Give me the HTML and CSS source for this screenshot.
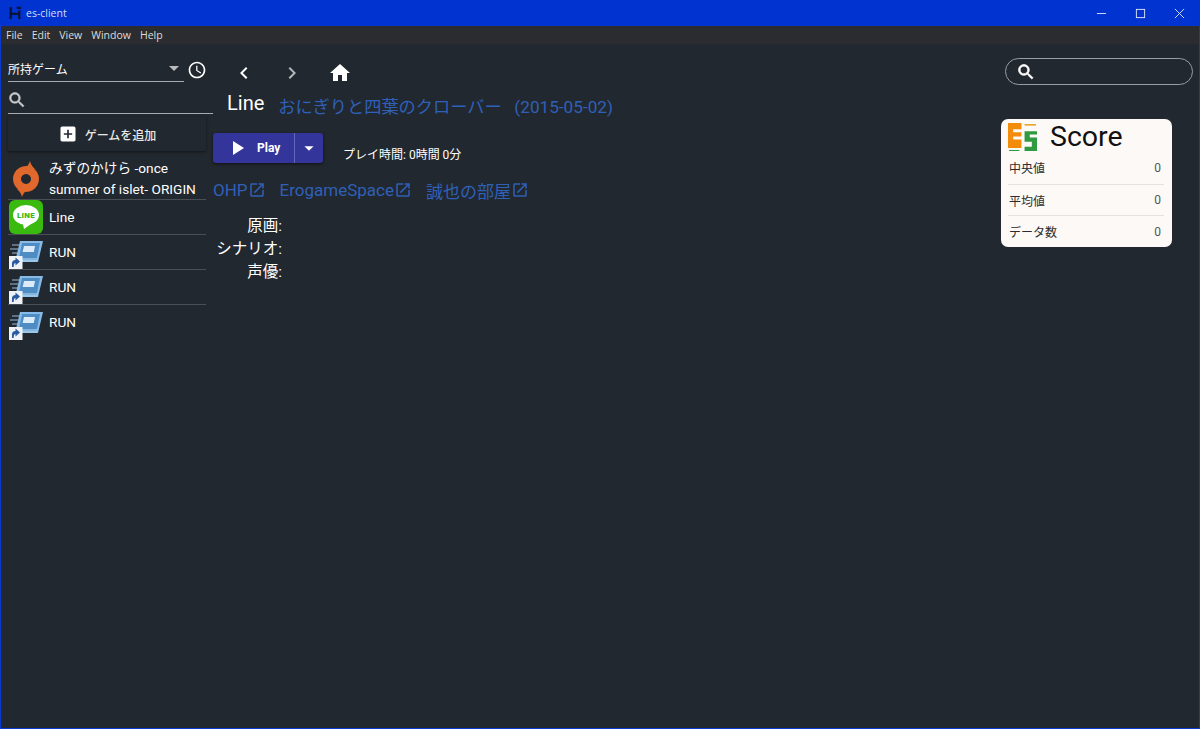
FILE: index.html
```html
<!DOCTYPE html>
<html lang="ja">
<head>
    <meta charset="UTF-8">
    <title>es-client</title>
    <link rel="stylesheet" href="styles.css">
</head>
<body>
    <svg class="defs" width="0" height="0">
        <symbol id="run-icon" viewBox="0 0 34 34">
            <path d="M3 10h8M1 14h8M3 18h6M2 22h5" stroke="#8fa9c6" stroke-width="1.300" opacity=".75"/>
            <path d="M11 6h23l-5 21H6z" fill="#86bbe8"/>
            <path d="M13 8h18l-3.500 17H9.500z" fill="#4f8cc4"/>
            <path d="M15 11h11l-1.200 6H13.600z" fill="#dcebf8"/>
            <path d="M11 23h18l-1.500 4H6z" fill="#a9d0ee" opacity=".6"/>
            <rect x="0" y="21" width="13.500" height="13" fill="#eef2f6"/>
            <path d="M3 32v-3.500c0-2.200 1.200-3.500 3.500-3.500v-2.500l4.500 4-4.500 4V28c-1.200 0-1.800 1.200-1.800 4z" fill="#2a5aa0"/>
        </symbol>
    </svg>

    <div class="window">
        <div class="titlebar">
            <svg class="app-logo" viewBox="0 0 14 16"><path d="M2 1v14M12 5v10M2 9h10M9 2h5" stroke="#071338" stroke-width="2.600" fill="none"/></svg>
            <span class="app-name">es-client</span>
            <div class="win-buttons">
                <svg viewBox="0 0 12 12"><path d="M1 6h10" stroke="#dfe6ff" stroke-width="1"/></svg>
                <svg viewBox="0 0 12 12"><rect x="1.500" y="1.500" width="9" height="9" fill="none" stroke="#dfe6ff" stroke-width="1"/></svg>
                <svg viewBox="0 0 12 12"><path d="M1 1l10 10M11 1L1 11" stroke="#dfe6ff" stroke-width="1"/></svg>
            </div>
        </div>
        <div class="menubar">
            <span>File</span><span>Edit</span><span>View</span><span>Window</span><span>Help</span>
        </div>

        <div class="layout">
            <div class="sidebar">
                <div class="filter-row">
                    <div class="select">
                        <span>所持ゲーム</span>
                        <svg class="caret" viewBox="0 0 10 5"><path d="M0 0l5 5 5-5z"/></svg>
                    </div>
                    <svg class="clock" viewBox="0 0 24 24"><path d="M11.990 2C6.470 2 2 6.480 2 12s4.470 10 9.990 10C17.520 22 22 17.520 22 12S17.520 2 11.990 2zM12 20c-4.420 0-8-3.580-8-8s3.580-8 8-8 8 3.580 8 8-3.580 8-8 8zm.5-13H11v6l5.250 3.150.75-1.230-4.500-2.670z"/></svg>
                </div>
                <div class="side-search">
                    <svg viewBox="0 0 24 24"><path d="M15.500 14h-.79l-.28-.27C15.410 12.590 16 11.110 16 9.500 16 5.910 13.090 3 9.500 3S3 5.910 3 9.500 5.910 16 9.500 16c1.610 0 3.090-.59 4.230-1.570l.27.28v.79l5 4.990L20.490 19l-4.990-5zm-6 0C7.010 14 5 11.990 5 9.500S7.010 5 9.500 5 14 7.010 14 9.500 11.990 14 9.500 14z"/></svg>
                </div>
                <div class="add-btn">
                    <svg viewBox="0 0 24 24"><path d="M19 3H5c-1.110 0-2 .9-2 2v14c0 1.100.89 2 2 2h14c1.100 0 2-.9 2-2V5c0-1.100-.9-2-2-2zm-2 10h-4v4h-2v-4H7v-2h4V7h2v4h4v2z"/></svg>
                    <span>ゲームを追加</span>
                </div>
                <ul class="game-list">
                    <li class="game tall">
                        <svg class="game-icon" viewBox="0 0 34 40">
                            <path d="M21 4c.5 3 2 5 5 8H15c3-2 5-5 6-8z" fill="#e0682c"/>
                            <path d="M13 40c-.5-3-2-5-5-8h11c-3 2-5 5-6 8z" fill="#e0682c"/>
                            <path fill="#e0682c" fill-rule="evenodd" d="M17 9a13 13 0 1 0 .01 0zM17 17a5 5 0 1 1-.01 0z"/>
                        </svg>
                        <span>みずのかけら -once summer of islet- ORIGIN</span>
                    </li>
                    <li class="game">
                        <svg class="game-icon" viewBox="0 0 34 34">
                            <rect width="34" height="34" rx="6" fill="#3ab90f"/>
                            <ellipse cx="17" cy="15" rx="13" ry="10" fill="#fff"/>
                            <path d="M14 24l1 5 7-5z" fill="#fff"/>
                            <text x="17" y="18" class="line-text">LINE</text>
                        </svg>
                        <span>Line</span>
                    </li>
                    <li class="game"><svg class="game-icon"><use href="#run-icon"/></svg><span>RUN</span></li>
                    <li class="game"><svg class="game-icon"><use href="#run-icon"/></svg><span>RUN</span></li>
                    <li class="game"><svg class="game-icon"><use href="#run-icon"/></svg><span>RUN</span></li>
                </ul>
            </div>

            <div class="content">
                <div class="nav">
                    <svg viewBox="0 0 24 24"><path d="M15.410 7.410L14 6l-6 6 6 6 1.410-1.410L10.830 12z"/></svg>
                    <svg class="dim" viewBox="0 0 24 24"><path d="M10 6L8.590 7.410 13.170 12l-4.580 4.590L10 18l6-6z"/></svg>
                    <svg viewBox="0 0 24 24"><path d="M10 20v-6h4v6h5v-8h3L12 3 2 12h3v8z"/></svg>
                </div>
                <div class="title-row">
                    <h1>Line</h1>
                    <a class="brand">おにぎりと四葉のクローバー&nbsp;&nbsp; (2015-05-02)</a>
                </div>
                <div class="play-row">
                    <div class="play-group">
                        <div class="play-btn">
                            <svg viewBox="0 0 24 24"><path d="M8 5v14l11-7z"/></svg>
                            <span>Play</span>
                        </div>
                        <div class="play-more">
                            <svg viewBox="0 0 24 24"><path d="M7 10l5 5 5-5z"/></svg>
                        </div>
                    </div>
                    <span class="playtime">プレイ時間: 0時間 0分</span>
                </div>
                <div class="links">
                    <a>OHP<svg viewBox="0 0 24 24"><path d="M19 19H5V5h7V3H5c-1.110 0-2 .9-2 2v14c0 1.100.89 2 2 2h14c1.100 0 2-.9 2-2v-7h-2v7zM14 3v2h3.590l-9.830 9.830 1.410 1.410L19 6.410V10h2V3h-7z"/></svg></a>
                    <a>ErogameSpace<svg viewBox="0 0 24 24"><path d="M19 19H5V5h7V3H5c-1.110 0-2 .9-2 2v14c0 1.100.89 2 2 2h14c1.100 0 2-.9 2-2v-7h-2v7zM14 3v2h3.590l-9.830 9.830 1.410 1.410L19 6.410V10h2V3h-7z"/></svg></a>
                    <a>誠也の部屋<svg viewBox="0 0 24 24"><path d="M19 19H5V5h7V3H5c-1.110 0-2 .9-2 2v14c0 1.100.89 2 2 2h14c1.100 0 2-.9 2-2v-7h-2v7zM14 3v2h3.590l-9.830 9.830 1.410 1.410L19 6.410V10h2V3h-7z"/></svg></a>
                </div>
                <div class="staff">
                    <div>原画:</div>
                    <div>シナリオ:</div>
                    <div>声優:</div>
                </div>
            </div>

            <div class="aside">
                <div class="top-search">
                    <svg viewBox="0 0 24 24"><path d="M15.500 14h-.79l-.28-.27C15.410 12.590 16 11.110 16 9.500 16 5.910 13.090 3 9.500 3S3 5.910 3 9.500 5.910 16 9.500 16c1.610 0 3.090-.59 4.230-1.570l.27.28v.79l5 4.990L20.490 19l-4.990-5zm-6 0C7.010 14 5 11.990 5 9.500S7.010 5 9.500 5 14 7.010 14 9.500 11.990 14 9.500 14z"/></svg>
                </div>
                <div class="score-card">
                    <div class="score-head">
                        <svg viewBox="0 0 28 28">
                            <path d="M0 1h13v6H5v3h8v4H5v3h8v8H0z" fill="#f28c0a"/>
                            <path d="M16 2h11v1.500H16z" fill="#e8a020"/>
                            <path d="M1 27h10v1.200H1z" fill="#2f9a3f"/>
                            <path d="M16 9h12v3h-7v3h7v13H16v-4h7v-5h-7z" fill="#2f9a3f"/>
                        </svg>
                        <span>Score</span>
                    </div>
                    <div class="score-row"><span>中央値</span><span class="val">0</span></div>
                    <div class="score-row"><span>平均値</span><span class="val">0</span></div>
                    <div class="score-row"><span>データ数</span><span class="val">0</span></div>
                </div>
            </div>
        </div>
    </div>
</body>
</html>
```

FILE: styles.css
```css
* {
    box-sizing: border-box;
}

html, body {
    margin: 0;
    height: 100%;
}

body {
    font-family: Roboto, "Noto Sans CJK JP", sans-serif;
    background-color: #22282f;
    color: #fff;
    overflow: hidden;
}

.defs {
    position: absolute;
}

.window {
    height: 729px;
    display: flex;
    flex-direction: column;
    border-left: 1px solid #0a3ad0;
    border-right: 1px solid #0a3ad0;
    border-bottom: 1px solid #0a3ad0;
}

.titlebar {
    height: 26px;
    margin: 0 -1px;
    background-color: #0033cf;
    display: flex;
    align-items: center;
    padding-left: 9px;
}

.app-logo {
    width: 12px;
    height: 16px;
}

.app-name {
    font-family: "Open Sans", sans-serif;
    font-size: 10.500px;
    color: #d5ddf8;
    margin-left: 5px;
}

.win-buttons {
    margin-left: auto;
    display: flex;
    align-items: center;
    gap: 28px;
    padding-right: 15px;
}

.win-buttons svg {
    width: 11px;
    height: 11px;
}

.menubar {
    height: 18px;
    background-color: #2a2c2f;
    display: flex;
    align-items: center;
    gap: 9px;
    padding-left: 5px;
    font-family: "Open Sans", sans-serif;
    font-size: 10.500px;
    color: #dcdcdc;
}

.layout {
    flex: 1;
    display: flex;
}

.sidebar {
    width: 212px;
    padding: 14px 0 0 7px;
    flex-shrink: 0;
}

.filter-row {
    display: flex;
    align-items: center;
    height: 24px;
}

.select {
    width: 176px;
    height: 24px;
    display: flex;
    align-items: center;
    justify-content: space-between;
    padding: 0 5px 3px 0;
    border-bottom: 1px solid #a8abaf;
    font-size: 12px;
}

.caret {
    width: 10px;
    height: 5px;
    fill: #b8babd;
}

.clock {
    width: 20px;
    height: 20px;
    fill: #fff;
    margin-left: 3px;
}

.side-search {
    height: 32px;
    border-bottom: 1px solid #a8abaf;
    display: flex;
    align-items: flex-end;
}

.side-search svg {
    width: 20px;
    height: 20px;
    fill: #c8cacc;
    stroke: #c8cacc;
    stroke-width: 0.6;
    margin: 0 0 3px -1px;
}

.add-btn {
    width: 198px;
    height: 34px;
    margin-top: 3px;
    display: flex;
    align-items: center;
    justify-content: center;
    gap: 7px;
    box-shadow: 0 1px 3px rgba(0, 0, 0, 0.45);
    font-size: 12px;
    font-weight: 500;
    color: #e8e8e8;
}

.add-btn svg {
    width: 20px;
    height: 20px;
    fill: #fff;
}

.game-list {
    list-style: none;
    margin: 4px 0 0;
    padding: 0;
    width: 198px;
}

.game {
    height: 35px;
    display: flex;
    align-items: center;
    gap: 6px;
    border-bottom: 1px solid #4a4e55;
    font-size: 13.700px;
    line-height: 21px;
}

.game:last-child {
    border-bottom: 0;
}

.game.tall {
    height: 45px;
}

.tall span {
    padding-top: 4px;
}

.game-icon {
    width: 34px;
    height: 34px;
    margin-left: 1px;
    flex-shrink: 0;
}

.tall .game-icon {
    height: 40px;
}

.line-text {
    font-family: Roboto, sans-serif;
    font-size: 8px;
    font-weight: 900;
    letter-spacing: 0.3px;
    fill: #3ab90f;
    text-anchor: middle;
}

.content {
    flex: 1;
    padding-top: 15px;
}

.nav {
    height: 28px;
    display: flex;
    align-items: center;
    gap: 24px;
    padding-left: 19px;
}

.nav svg {
    width: 24px;
    height: 24px;
    fill: #fff;
}

.nav svg.dim {
    fill: #b4b6b9;
}

.title-row {
    display: flex;
    align-items: flex-start;
    gap: 14px;
    height: 34px;
    padding: 4px 0 0 14px;
}

h1 {
    margin: 0;
    font-size: 20px;
    font-weight: 400;
    line-height: 24px;
}

.brand {
    font-size: 17.200px;
    line-height: 24px;
    margin-top: 4px;
    color: #2f60b8;
}

.play-row {
    display: flex;
    align-items: flex-start;
    margin-top: 12px;
}

.play-group {
    display: flex;
    height: 30px;
    width: 110px;
    border-radius: 3px;
    background-color: #34359a;
    box-shadow: 0 1px 3px rgba(0, 0, 0, 0.6);
}

.play-btn {
    width: 82px;
    display: flex;
    align-items: center;
    gap: 8px;
    padding-left: 12px;
    border-right: 1px solid #6466b8;
    font-size: 12px;
    font-weight: 700;
}

.play-btn svg {
    width: 24px;
    height: 24px;
    fill: #fff;
}

.play-more {
    flex: 1;
    display: flex;
    align-items: center;
    justify-content: center;
}

.play-more svg {
    width: 22px;
    height: 22px;
    fill: #fff;
}

.playtime {
    font-size: 12px;
    margin: 14px 0 0 20px;
    line-height: 16px;
}

.links {
    display: flex;
    gap: 14px;
    margin-top: 15px;
    height: 24px;
    align-items: center;
}

.links a {
    display: flex;
    align-items: center;
    font-size: 17px;
    color: #2f60b8;
}

.links svg {
    width: 18px;
    height: 18px;
    fill: #2f60b8;
}

.staff {
    width: 69px;
    margin-top: 13px;
    text-align: right;
    font-size: 15.500px;
    line-height: 23px;
}

.aside {
    width: 198px;
    flex-shrink: 0;
    padding-top: 14px;
}

.top-search {
    width: 188px;
    height: 27px;
    margin-left: 4px;
    border: 1px solid #9a9da1;
    border-radius: 14px;
    display: flex;
    align-items: center;
    padding-left: 10px;
}

.top-search svg {
    width: 20px;
    height: 20px;
    fill: #fff;
    stroke: #fff;
    stroke-width: 0.8;
}

.score-card {
    width: 171px;
    height: 128px;
    margin-top: 34px;
    padding: 2px 8px 0 7px;
    background-color: #fdf9f7;
    border-radius: 7px;
    color: #2c2c2c;
}

.score-head {
    display: flex;
    align-items: center;
    gap: 13px;
    height: 30px;
    font-size: 28.500px;
    color: #111;
}

.score-head svg {
    width: 29px;
    height: 29px;
}

.score-row {
    display: flex;
    justify-content: space-between;
    align-items: center;
    height: 31px;
    padding: 0 3px 0 1px;
    font-size: 12px;
    border-bottom: 1px solid #e6e2e0;
}

.score-head + .score-row {
    height: 34px;
}

.score-row:last-child {
    border-bottom: 0;
}

.val {
    color: #555;
}
```
